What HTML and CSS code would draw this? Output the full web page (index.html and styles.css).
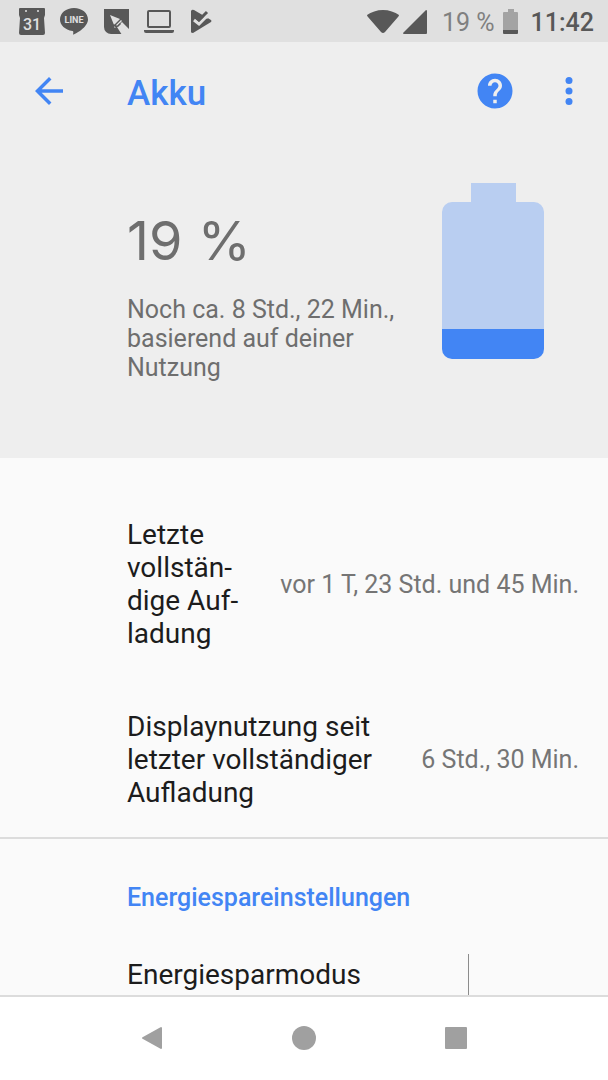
FILE: index.html
```html
<!DOCTYPE html>
<html lang="de">
<head>
    <meta charset="UTF-8">
    <meta name="viewport" content="width=device-width, initial-scale=1.0">
    <title>Akku</title>
    <link rel="stylesheet" href="styles.css">
</head>
<body>
    <div class="status-bar">
        <div class="notifications">
            <!-- Calendar -->
            <svg width="28" height="28" viewBox="0 0 28 28">
                <path fill="#585858" d="M2 0h24a1 1 0 0 1 1 1v6l-1 3 1 15a2 2 0 0 1-2 2H3a2 2 0 0 1-2-2L2 10 1 7V1a1 1 0 0 1 1-1z"/>
                <circle cx="8" cy="3" r="1" fill="#e0e0e0"/>
                <circle cx="20" cy="3" r="1" fill="#e0e0e0"/>
                <text class="calendar-day" x="14" y="22">31</text>
            </svg>
            <!-- Line -->
            <svg width="28" height="28" viewBox="0 0 28 28">
                <path fill="#585858" d="M14 0C6 0 0 5 0 11.500c0 5.500 5 10.500 12.500 11.500 1 .2 1 1 .5 3.500 1 .5 15-7 15-15C28 5 22 0 14 0z"/>
                <text class="line-name" x="14" y="15">LINE</text>
            </svg>
            <!-- Pen -->
            <svg width="28" height="28" viewBox="0 0 28 28">
                <path fill="#585858" d="M2 1h25v25H9a7 7 0 0 1-7-7z"/>
                <path fill="#e0e0e0" d="M8 7l10 4-6 6zM19 12l1 1-7 7-1-1zM15 19l5-5 7 7v6h-7z"/>
                <path fill="#585858" d="M11 16l5 2-2 2zM15 18l3-3 1 1-3 3z"/>
            </svg>
            <!-- Laptop -->
            <svg width="30" height="28" viewBox="0 0 30 28">
                <rect x="4" y="3" width="22" height="16" rx="1" fill="none" stroke="#585858" stroke-width="2"/>
                <path fill="#585858" d="M0 22h30v1a2 2 0 0 1-2 2H2a2 2 0 0 1-2-2z"/>
            </svg>
            <!-- Play check -->
            <svg width="28" height="28" viewBox="0 0 28 28">
                <path fill="#585858" d="M3 3q1-2 3-1l17 10q1 1 0 2L5 25q-2 0-2-1z"/>
                <path fill="#e0e0e0" d="M13 5l5-4 6 5-5 5z"/>
                <path fill="none" stroke="#e0e0e0" stroke-width="3" d="M6 12l5 4L21 6"/>
                <path fill="none" stroke="#585858" stroke-width="3" d="M8 9l3 3 8-8"/>
            </svg>
        </div>
        <div class="system">
            <svg width="32" height="26" viewBox="0 0 32 26">
                <path fill="#585858" d="M16 1C10 1 4 3 0 6q0 1 1 2l13 15q2 2 4 0L31 8q1-1 1-2C28 3 22 1 16 1z"/>
            </svg>
            <svg width="24" height="26" viewBox="0 0 24 26">
                <path fill="#585858" d="M23 1q1 0 1 1v22q0 1-1 1H1q-1 0-1-1z"/>
            </svg>
            <span class="percent">19 %</span>
            <svg width="16" height="26" viewBox="0 0 16 26">
                <path fill="#a3a3a3" d="M5 0h6v3h3a1 1 0 0 1 1 1v17H0V4a1 1 0 0 1 1-1h4z"/>
                <path fill="#585858" d="M0 21h15v3a1 1 0 0 1-1 1H1a1 1 0 0 1-1-1z"/>
            </svg>
            <span class="clock">11:42</span>
        </div>
    </div>

    <header class="app-bar">
        <button class="icon-button" aria-label="Zurück">
            <svg width="42" height="42" viewBox="0 0 24 24">
                <path fill="#4285f4" d="M20 11H7.830l5.590-5.590L12 4l-8 8 8 8 1.410-1.410L7.830 13H20v-2z"/>
            </svg>
        </button>
        <h1>Akku</h1>
        <button class="icon-button" aria-label="Hilfe">
            <svg width="42" height="42" viewBox="0 0 24 24">
                <path fill="#4285f4" d="M12 2C6.480 2 2 6.480 2 12s4.480 10 10 10 10-4.480 10-10S17.520 2 12 2zm1 17h-2v-2h2v2zm2.070-7.750l-.9.920C13.450 12.900 13 13.500 13 15h-2v-.5c0-1.100.45-2.100 1.170-2.830l1.240-1.260c.37-.36.59-.86.59-1.410 0-1.100-.9-2-2-2s-2 .9-2 2H8c0-2.210 1.790-4 4-4s4 1.790 4 4c0 .88-.36 1.680-.93 2.250z"/>
            </svg>
        </button>
        <button class="icon-button" aria-label="Weitere Optionen">
            <svg width="42" height="42" viewBox="0 0 24 24" fill="#4285f4">
                <circle cx="12" cy="6" r="2"/>
                <circle cx="12" cy="12" r="2"/>
                <circle cx="12" cy="18" r="2"/>
            </svg>
        </button>
    </header>

    <section class="battery">
        <div class="battery-text">
            <p class="level">19 %</p>
            <p class="estimate">Noch ca. 8 Std., 22 Min., basierend auf deiner Nutzung</p>
        </div>
        <svg class="battery-icon" width="102" height="176" viewBox="0 0 102 176">
            <path fill="#b9cef1" d="M29 0h45v19h18a10 10 0 0 1 10 10v118H0V29a10 10 0 0 1 10-10h19z"/>
            <path fill="#4285f4" d="M0 146h102v20a10 10 0 0 1-10 10H10a10 10 0 0 1-10-10z"/>
        </svg>
    </section>

    <main>
        <div class="usage">
            <div class="row">
                <span class="title">Letzte vollstän&shy;dige Auf&shy;ladung</span>
                <span class="value">vor 1 T, 23 Std. und 45 Min.</span>
            </div>
            <div class="row">
                <span class="title">Displaynutzung seit letzter vollständiger Aufladung</span>
                <span class="value">6 Std., 30 Min.</span>
            </div>
        </div>
        <h2>Energiespareinstellungen</h2>
        <div class="saver">
            <a class="title" href="#">Energiesparmodus</a>
            <div class="widget"></div>
        </div>
    </main>

    <nav class="nav-bar">
        <button class="icon-button" aria-label="Zurück">
            <svg width="24" height="24" viewBox="0 0 24 24">
                <path fill="#a0a0a0" stroke="#a0a0a0" stroke-width="2" stroke-linejoin="round" d="M3 12l18-10v20z"/>
            </svg>
        </button>
        <button class="icon-button" aria-label="Startseite">
            <svg width="24" height="24" viewBox="0 0 24 24">
                <circle cx="12" cy="12" r="12" fill="#a0a0a0"/>
            </svg>
        </button>
        <button class="icon-button" aria-label="Übersicht">
            <svg width="24" height="24" viewBox="0 0 24 24">
                <rect x="1" y="1" width="22" height="22" rx="1" fill="#a0a0a0"/>
            </svg>
        </button>
    </nav>
</body>
</html>
```
FILE: styles.css
```css
* {
    box-sizing: border-box;
}

body {
    font-family: Roboto, sans-serif;
    margin: 0;
    height: 100vh;
    display: flex;
    flex-direction: column;
    background-color: #fafafa;
    color: #1c1c1c;
}

h1, h2, p {
    margin: 0;
}

svg {
    display: block;
}

.status-bar {
    display: flex;
    justify-content: space-between;
    align-items: center;
    height: 42px;
    flex-shrink: 0;
    padding: 2px 14px 0 18px;
    background-color: #e0e0e0;
    color: #585858;
    font-size: 25px;
}

.notifications {
    display: flex;
    gap: 14px;
}

.calendar-day {
    fill: #e0e0e0;
    font-size: 16px;
    font-weight: 500;
    text-anchor: middle;
}

.line-name {
    fill: #e0e0e0;
    font-size: 9px;
    font-weight: 700;
    text-anchor: middle;
}

.system {
    display: flex;
    align-items: center;
    gap: 4px;
}

.percent {
    margin: 0 4px 0 11px;
    color: #808080;
}

.clock {
    margin-left: 8px;
    font-weight: 500;
}

.app-bar {
    display: flex;
    align-items: center;
    height: 98px;
    flex-shrink: 0;
    gap: 32px;
    padding: 0 18px 0 28px;
    background-color: #eeeeee;
}

.app-bar h1 {
    flex: 1;
    margin-left: 25px;
    padding-top: 4px;
    color: #4285f4;
    font-size: 35px;
    font-weight: 500;
}

.icon-button {
    display: flex;
    justify-content: center;
    align-items: center;
    padding: 0;
    border: none;
    background: none;
    cursor: pointer;
}

.battery {
    display: flex;
    justify-content: space-between;
    align-items: flex-start;
    gap: 40px;
    flex-shrink: 0;
    padding: 43px 64px 76px 127px;
    background-color: #eeeeee;
    color: #6e6e6e;
}

.battery-text {
    flex: 1;
    padding-top: 22px;
}

.level {
    font-family: Inter, sans-serif;
    font-size: 54px;
    line-height: 72px;
}

.estimate {
    margin-top: 18px;
    font-size: 25px;
    line-height: 29px;
}

.battery-icon {
    flex-shrink: 0;
}

main {
    flex: 1;
    min-height: 0;
    overflow: hidden;
}

.usage {
    padding-top: 30px;
    border-bottom: 2px solid #dcdcdc;
}

.row {
    display: flex;
    align-items: center;
    gap: 28px;
    padding: 30px 29px 30px 127px;
}

.row .title {
    flex: 1;
}

.row:last-child {
    padding-bottom: 28px;
}

.title {
    color: #1c1c1c;
    font-size: 28px;
    line-height: 33px;
    text-decoration: none;
}

.value {
    color: #757575;
    font-size: 25px;
    white-space: nowrap;
}

h2 {
    padding: 44px 29px 0 127px;
    color: #4285f4;
    font-size: 25px;
    font-weight: 500;
    line-height: 30px;
}

.saver {
    display: flex;
    justify-content: space-between;
    align-items: flex-start;
    padding-left: 127px;
    margin-top: 41px;
}

.saver .title {
    padding-top: 4px;
}

.widget {
    width: 140px;
    height: 54px;
    border-left: 1px solid #8c8c8c;
}

.nav-bar {
    display: grid;
    grid-template-columns: repeat(3, 1fr);
    height: 85px;
    flex-shrink: 0;
    padding: 0 12.5% 1px;
    border-top: 2px solid #dcdcdc;
    background-color: #ffffff;
}
```
